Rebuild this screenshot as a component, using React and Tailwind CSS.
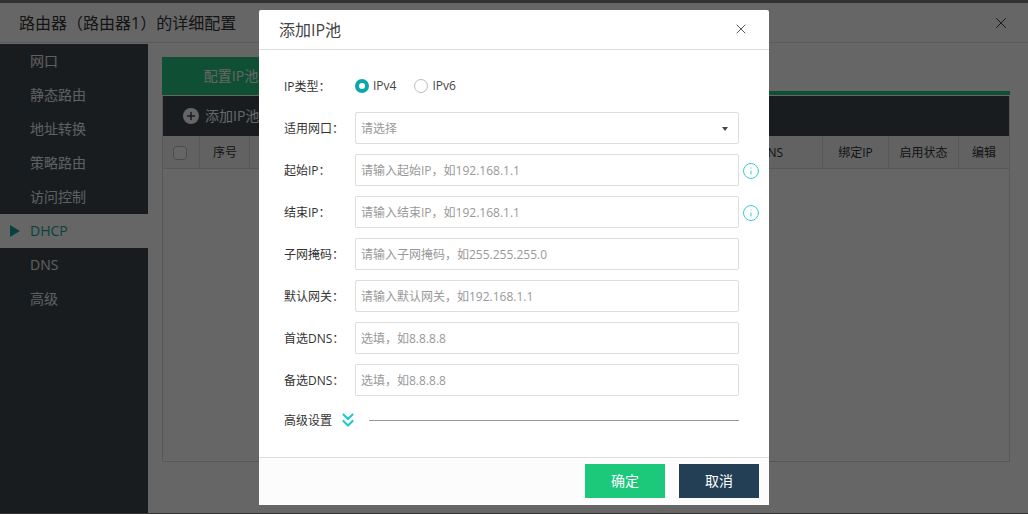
import React from 'react';
import { X, Plus, ChevronsDown, Info } from 'lucide-react';

const menu = ['网口', '静态路由', '地址转换', '策略路由', '访问控制', 'DHCP', 'DNS', '高级'];

const fields = [
  { label: '起始IP：', placeholder: '请输入起始IP，如192.168.1.1', tip: true },
  { label: '结束IP：', placeholder: '请输入结束IP，如192.168.1.1', tip: true },
  { label: '子网掩码：', placeholder: '请输入子网掩码，如255.255.255.0' },
  { label: '默认网关：', placeholder: '请输入默认网关，如192.168.1.1' },
  { label: '首选DNS：', placeholder: '选填，如8.8.8.8' },
  { label: '备选DNS：', placeholder: '选填，如8.8.8.8' },
];

const columns = [
  { title: '', width: 'w-[37px] pr-[3px]', check: true },
  { title: '序号', width: 'w-[50px] pl-px' },
  { title: 'DNS', width: 'flex-1 justify-end pr-[39px]' },
  { title: '绑定IP', width: 'w-[66px]' },
  { title: '启用状态', width: 'w-[70px]' },
  { title: '编辑', width: 'w-[50px] border-r-0' },
];

function Row({ label, children }) {
  return (
    <div className="flex h-8 items-center">
      <div className="w-[71px] shrink-0 pt-px text-xs text-[#333]">{label}</div>
      {children}
    </div>
  );
}

export default function App() {
  return (
    <div className="relative h-[514px] w-[1028px] overflow-hidden bg-[#7d7d7d] pt-[3px] font-['Open_Sans','Noto_Sans_CJK_SC',sans-serif]">
      <div className="flex h-[510px] flex-col bg-white">
        <div className="mb-px flex h-10 shrink-0 items-center justify-between border-b border-[#e0e0e0] pl-[19px] pr-[18px]">
          <span className="text-base text-[#333]">路由器（路由器1）的详细配置</span>
          <X size={18} strokeWidth={1.25} className="text-[#333]" />
        </div>
        <div className="flex flex-1">
          <div className="w-[148px] shrink-0 bg-[#3e464e]">
            {menu.map(item => (
              <div
                key={item}
                className={`relative flex h-[34px] items-center pl-[30px] text-sm ${
                  item === 'DHCP' ? 'bg-white text-[#10a8a0]' : 'text-[#eee]'
                }`}
              >
                {item === 'DHCP' && (
                  <span className="absolute left-[10px] h-0 w-0 border-y-[6px] border-l-[10px] border-y-transparent border-l-[#10a8a0]" />
                )}
                {item}
              </div>
            ))}
          </div>
          <div className="flex-1 pl-[14px] pr-[18px] pt-[13px]">
            <div className="flex h-[38px] items-end border-b-[4px] border-[#26c882]">
              <div className="flex h-[38px] w-[138px] shrink-0 translate-y-[4px] items-center justify-center bg-[#26c882] text-sm text-white">
                配置IP池
              </div>
            </div>
            <div className="mt-px flex h-[366px] flex-col border-x border-b border-[#ddd]">
              <div className="flex h-10 shrink-0 items-center bg-[#3e464e] pl-5 text-sm text-white">
                <span className="mr-[6px] flex h-4 w-4 items-center justify-center rounded-full bg-white">
                  <Plus size={12} strokeWidth={3} className="text-[#3e464e]" />
                </span>
                添加IP池
              </div>
              <div className="flex h-[33px] shrink-0 border-b border-[#ddd] bg-[#f5f5f5] text-xs text-[#333]">
                {columns.map((col, i) => (
                  <div key={i} className={`flex items-center justify-center border-r border-[#ddd] pt-px ${col.width}`}>
                    {col.check ? <span className="h-[14px] w-[14px] rounded-sm border border-[#bbb] bg-white" /> : col.title}
                  </div>
                ))}
              </div>
            </div>
          </div>
        </div>
      </div>

      <div className="absolute inset-0 bg-black/60" />

      <div className="absolute left-[259px] top-[10px] flex h-[495px] w-[510px] flex-col rounded-[2px] bg-white">
        <div className="flex h-10 shrink-0 items-center justify-between border-b border-[#ddd] pl-5 pr-[20px]">
          <span className="text-base text-[#444]">添加IP池</span>
          <X size={16} strokeWidth={1.5} className="mb-[2px] text-[#555]" />
        </div>

        <div className="flex flex-1 flex-col gap-[10px] pl-[25px] pt-5">
          <Row label="IP类型：">
            <label className="flex items-center text-xs text-[#444]">
              <span className="mr-1 h-[14px] w-[14px] rounded-full border-[4px] border-[#0aa8a8] bg-white" />
              IPv4
            </label>
            <label className="ml-[18px] flex items-center text-xs text-[#444]">
              <span className="mr-1 h-[14px] w-[14px] rounded-full border border-[#bbb] bg-white" />
              IPv6
            </label>
          </Row>
          <Row label="适用网口：">
            <div className="flex h-8 w-[384px] items-center justify-between rounded-[2px] border border-[#ddd] pl-[5px] pr-[10px] pt-px text-xs text-[#999]">
              请选择
              <span className="h-0 w-0 border-x-[3.5px] border-t-[4px] border-x-transparent border-t-[#445]" />
            </div>
          </Row>
          {fields.map(f => (
            <Row key={f.label} label={f.label}>
              <input
                readOnly
                placeholder={f.placeholder}
                className="h-8 w-[384px] rounded-[2px] border border-[#ddd] px-[5px] pt-px text-xs outline-none placeholder:text-[#999]"
              />
              {f.tip && <Info size={18} strokeWidth={1.2} className="ml-[3px] mt-[2px] text-[#22c8d0]" />}
            </Row>
          ))}
          <div className="mt-[-2px] flex h-8 items-center">
            <span className="pt-px text-xs text-[#333]">高级设置</span>
            <ChevronsDown size={22} strokeWidth={2.25} className="ml-[5px] text-[#22c8d0]" />
            <div className="ml-[10px] h-px w-[370px] bg-[#999]" />
          </div>
        </div>

        <div className="flex h-12 shrink-0 items-start justify-end gap-[14px] border-t border-[#ddd] bg-[#fcfcfc] pr-[10px] pt-[6px] text-sm text-white">
          <button className="h-[34px] w-20 bg-[#1cc87a]">确定</button>
          <button className="h-[34px] w-20 bg-[#223f56]">取消</button>
        </div>
      </div>
    </div>
  );
}
